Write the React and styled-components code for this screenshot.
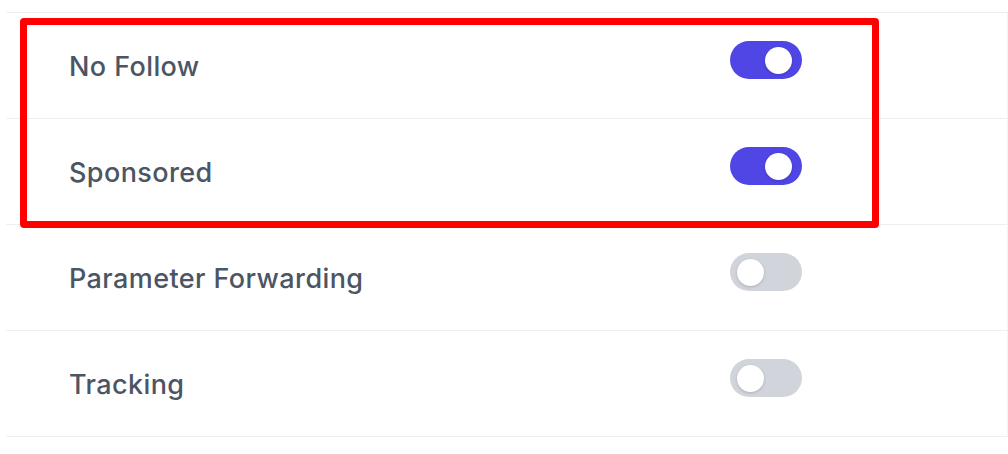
import React, { useState } from "react";
import styled, { createGlobalStyle } from "styled-components";

const GlobalStyle = createGlobalStyle`
  body {
    margin: 0;
    background: #fff;
    font-family: Inter, "Noto Sans", sans-serif;
  }
`;

const Page = styled.div`
  position: relative;
  padding: 12px 0 0 6px;
  width: 1008px;
  height: 454px;
  box-sizing: border-box;
  overflow: hidden;
`;

const List = styled.div`
  border-top: 1px solid #eeeff1;
  border-right: 1px solid #f3f3f5;
`;

const Row = styled.div`
  display: flex;
  align-items: center;
  height: 105px;
  border-bottom: 1px solid #eeeff1;
  padding-left: 63px;
`;

const Label = styled.span`
  width: 661px;
  padding-top: 2px;
  font-size: 27px;
  font-weight: 500;
  color: #4b5563;
  letter-spacing: 0.4px;
`;

const Track = styled.button`
  position: relative;
  align-self: flex-start;
  margin-top: 28px;
  width: 72px;
  height: 38px;
  padding: 0;
  border: 0;
  border-radius: 19px;
  background: ${p => (p.on ? "#4f46e5" : "#d1d5db")};
  cursor: pointer;
`;

const Knob = styled.span`
  position: absolute;
  top: 6px;
  left: ${p => (p.on ? "35px" : "7px")};
  width: 27px;
  height: 27px;
  border-radius: 50%;
  background: #fff;
  box-shadow: 0 1px 3px rgba(0, 0, 0, 0.18);
`;

const Highlight = styled.div`
  position: absolute;
  left: 20px;
  top: 18px;
  width: 859px;
  height: 210px;
  box-sizing: border-box;
  border: 7px solid #ff0000;
  border-radius: 4px;
  pointer-events: none;
`;

const settings = [
  { label: "No Follow", on: true },
  { label: "Sponsored", on: true },
  { label: "Parameter Forwarding", on: false },
  { label: "Tracking", on: false }
];

const Toggle = ({ on, onClick }) => (
  <Track on={on ? 1 : 0} onClick={onClick}>
    <Knob on={on ? 1 : 0} />
  </Track>
);

export default function App() {
  const [items, setItems] = useState(settings);

  const flip = i =>
    setItems(list => list.map((s, j) => (j === i ? { ...s, on: !s.on } : s)));

  return (
    <>
      <GlobalStyle />
      <Page>
        <List>
          {items.map((s, i) => (
            <Row key={s.label}>
              <Label>{s.label}</Label>
              <Toggle on={s.on} onClick={() => flip(i)} />
            </Row>
          ))}
        </List>
        <Highlight />
      </Page>
    </>
  );
}
